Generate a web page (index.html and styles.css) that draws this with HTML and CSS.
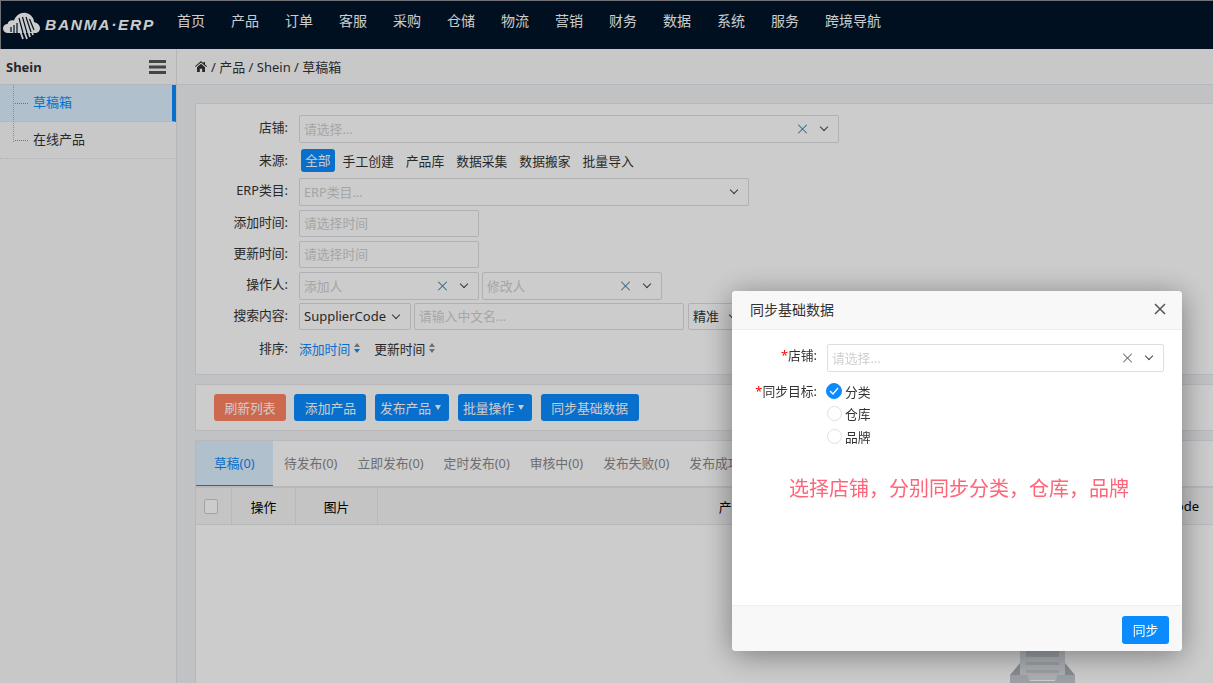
FILE: index.html
```html
<!DOCTYPE html>
<html lang="zh-CN">
<head>
  <meta charset="UTF-8">
  <title>草稿箱 | BANMA ERP</title>
  <link rel="stylesheet" href="styles.css">
</head>
<body>
  <!-- 顶部导航 -->
  <header class="topbar">
    <div class="logo">
      <svg class="logo-icon" width="38" height="28" viewBox="0 0 38 28">
        <path fill="#fff" d="M5 21C2 21 0 19 0 16.500C0 13.500 2 12 4.500 12C5 9 8 7.500 11 8.500C13 3 18 0 23 1C28 2 31 6 31 10C35 11 37 13.500 37 16C37 19 35 21 32 21Z"/>
        <path fill="none" stroke="#001529" stroke-width="1.200" d="M8 20V15M11 21V13M14 21V11M16 6L20 21M19.500 5L24 21M23 5L28 20M26.500 7L31 18"/>
        <path fill="none" stroke="#fff" stroke-width="1.800" d="M17.500 20L20 27M21.500 20L24 27M25.500 20L27 25M29 20L30 23"/>
      </svg>
      <span class="logo-text">BANMA·ERP</span>
    </div>
    <nav class="mainnav">
      <a href="#">首页</a>
      <a href="#">产品</a>
      <a href="#">订单</a>
      <a href="#">客服</a>
      <a href="#">采购</a>
      <a href="#">仓储</a>
      <a href="#">物流</a>
      <a href="#">营销</a>
      <a href="#">财务</a>
      <a href="#">数据</a>
      <a href="#">系统</a>
      <a href="#">服务</a>
      <a href="#">跨境导航</a>
    </nav>
  </header>

  <div class="layout">
    <!-- 左侧菜单 -->
    <aside class="sidebar">
      <div class="sidebar-title">
        <b>Shein</b>
        <svg width="17" height="14" viewBox="0 0 17 14"><path fill="#555" d="M0 0H17V3H0ZM0 5.500H17V8.500H0ZM0 11H17V14H0Z"/></svg>
      </div>
      <ul class="side-menu">
        <li class="active"><a href="#">草稿箱</a></li>
        <li><a href="#">在线产品</a></li>
      </ul>
    </aside>

    <main class="content">
      <div class="breadcrumb">
        <svg width="12" height="11" viewBox="0 0 12 11"><path fill="#333" d="M6 0L8.500 2.200V1H10V3.500L12 5.300L11.400 6L6 1.400L.6 6L0 5.300ZM2 6.200L6 2.800L10 6.200V11H7.200V7.800H4.800V11H2Z"/></svg>
        <span>/ 产品 / Shein / 草稿箱</span>
      </div>

      <div class="content-body">
        <!-- 搜索条件 -->
        <section class="panel filter-panel">
          <div class="form-row row-shop">
            <label>店铺:</label>
            <div class="select w-540"><span class="ph">请选择...</span><i class="clear clear-blue"></i><i class="arrow"></i></div>
          </div>
          <div class="form-row row-source">
            <label>来源:</label>
            <div class="source-list">
              <a href="#" class="on">全部</a>
              <a href="#">手工创建</a>
              <a href="#">产品库</a>
              <a href="#">数据采集</a>
              <a href="#">数据搬家</a>
              <a href="#">批量导入</a>
            </div>
          </div>
          <div class="form-row row-erp">
            <label>ERP类目:</label>
            <div class="select w-450"><span class="ph">ERP类目...</span><i class="arrow"></i></div>
          </div>
          <div class="form-row row-time">
            <label>添加时间:</label>
            <div class="select w-180 short"><span class="ph">请选择时间</span></div>
          </div>
          <div class="form-row row-time">
            <label>更新时间:</label>
            <div class="select w-180 short"><span class="ph">请选择时间</span></div>
          </div>
          <div class="form-row row-user">
            <label>操作人:</label>
            <div class="select w-180"><span class="ph">添加人</span><i class="clear clear-blue"></i><i class="arrow"></i></div>
            <div class="select w-180"><span class="ph">修改人</span><i class="clear clear-blue"></i><i class="arrow"></i></div>
          </div>
          <div class="form-row row-search">
            <label>搜索内容:</label>
            <div class="select w-112 short"><span class="val">SupplierCode</span><i class="arrow"></i></div>
            <div class="select w-270 short"><span class="ph">请输入中文名...</span></div>
            <div class="select w-60 short gap-left"><span class="val">精准</span><i class="arrow"></i></div>
          </div>
          <div class="form-row row-sort">
            <label>排序:</label>
            <a href="#" class="sort on">添加时间<i class="sort-icon"></i></a>
            <a href="#" class="sort">更新时间<i class="sort-icon"></i></a>
          </div>
        </section>

        <!-- 操作按钮 -->
        <section class="panel action-panel">
          <button class="btn btn-orange">刷新列表</button>
          <button class="btn">添加产品</button>
          <button class="btn btn-drop">发布产品<i class="caret"></i></button>
          <button class="btn btn-drop">批量操作<i class="caret"></i></button>
          <button class="btn">同步基础数据</button>
        </section>

        <!-- 列表 -->
        <section class="panel list-panel">
          <div class="tabs">
            <a href="#" class="active">草稿(0)</a>
            <a href="#">待发布(0)</a>
            <a href="#">立即发布(0)</a>
            <a href="#">定时发布(0)</a>
            <a href="#">审核中(0)</a>
            <a href="#">发布失败(0)</a>
            <a href="#">发布成功(0)</a>
          </div>
          <div class="table-head">
            <div class="cell"><span class="checkbox"></span></div>
            <div class="cell">操作</div>
            <div class="cell">图片</div>
            <div class="cell">产品</div>
            <div class="cell">SupplierCode</div>
          </div>
          <div class="table-empty">
            <svg width="65" height="60" viewBox="0 0 65 60">
              <path fill="#d6dade" d="M10 0H55V40H10Z"/>
              <path fill="#bcc1c7" d="M16 0H49V17H16Z"/>
              <path fill="#c2c6cc" d="M16 22H49V25H16ZM16 30H49V33H16Z"/>
              <path fill="#a8afb6" d="M10 23V35H0ZM55 23V35H65Z"/>
              <path fill="#c4c9cf" d="M0 35H18C18 39 19 41 22 41H43C46 41 47 39 47 35H65V60H0Z"/>
            </svg>
          </div>
        </section>
      </div>
    </main>
  </div>

  <div class="mask"></div>

  <!-- 同步基础数据弹窗 -->
  <div class="modal">
    <div class="modal-head">
      <span>同步基础数据</span>
      <svg width="12" height="12" viewBox="0 0 12 12"><path stroke="#555" stroke-width="1.500" d="M1 1L11 11M11 1L1 11"/></svg>
    </div>
    <div class="modal-body">
      <div class="modal-row">
        <label><em>*</em>店铺:</label>
        <div class="select w-337"><span class="ph">请选择...</span><i class="clear"></i><i class="arrow"></i></div>
      </div>
      <div class="modal-row row-target">
        <label><em>*</em>同步目标:</label>
        <div class="radio-list">
          <div class="radio checked">
            <span class="radio-dot"><svg width="10" height="8" viewBox="0 0 10 8"><path fill="none" stroke="#fff" stroke-width="1.300" d="M1 4L4 7L9 1"/></svg></span>分类
          </div>
          <div class="radio"><span class="radio-dot"></span>仓库</div>
          <div class="radio"><span class="radio-dot"></span>品牌</div>
        </div>
      </div>
      <p class="modal-tip">选择店铺，分别同步分类，仓库，品牌</p>
    </div>
    <div class="modal-foot">
      <button class="btn btn-sync">同步</button>
    </div>
  </div>
</body>
</html>
```

FILE: styles.css
```css
:root {
  --primary: #0a8cff;
  --border: #dcdee2;
  --text: #333;
  --placeholder: #d0d0d0;
}

* {
  box-sizing: border-box;
}

html, body {
  height: 100%;
}

body {
  margin: 0;
  overflow: hidden;
  background: #f2f3f5;
  color: var(--text);
  font-family: "Noto Sans", "Noto Sans CJK SC", sans-serif;
  font-size: 12.800px;
}

a {
  color: inherit;
  text-decoration: none;
}

i {
  font-style: normal;
}

/* 顶部导航 */
.topbar {
  display: flex;
  align-items: center;
  height: 49px;
  background: #001529;
  border-top: 1px solid #8c8f93;
  border-left: 1px solid #8c8f93;
}

.logo {
  display: flex;
  align-items: center;
  gap: 4px;
  width: 176px;
  padding: 1px 0 0 2px;
}

.logo-text {
  margin-top: -1px;
  color: #fff;
  font-family: "Liberation Sans", sans-serif;
  font-size: 15.500px;
  font-style: italic;
  font-weight: bold;
  letter-spacing: 1.700px;
  white-space: nowrap;
}

.mainnav {
  display: flex;
  gap: 26px;
  padding-bottom: 10px;
}

.mainnav a {
  color: #fff;
  font-size: 14px;
}

/* 布局 */
.layout {
  display: flex;
  height: calc(100% - 49px);
}

.sidebar {
  flex: none;
  width: 177px;
  background: #fbfbfb;
  border-right: 1px solid #e3e4e6;
  font-size: 13px;
}

.sidebar-title {
  display: flex;
  align-items: center;
  justify-content: space-between;
  height: 36px;
  padding: 0 10px 0 6px;
  border-bottom: 1px solid #e3e4e6;
}

.side-menu {
  position: relative;
  margin: 0;
  padding: 0;
  list-style: none;
}

.side-menu::before {
  content: "";
  position: absolute;
  z-index: 1;
  left: 13px;
  top: 0;
  height: 57px;
  border-left: 1px dotted #8a8f96;
}

.side-menu li {
  position: relative;
  height: 37px;
  padding-left: 33px;
  line-height: 34px;
  border-bottom: 1px dotted #e0e0e0;
}

.side-menu li::before {
  content: "";
  position: absolute;
  left: 15px;
  top: 18px;
  width: 13px;
  border-top: 1px dotted #8a8f96;
}

.side-menu li.active {
  background: #dcf0ff;
  border-right: 4px solid var(--primary);
  color: var(--primary);
}

.content {
  flex: 1;
  display: flex;
  flex-direction: column;
  min-width: 0;
}

.breadcrumb {
  display: flex;
  flex: none;
  align-items: center;
  gap: 4px;
  height: 36px;
  padding-left: 18px;
  background: #fbfbfb;
  border-bottom: 1px solid #e3e4e6;
  font-size: 13px;
}

.content-body {
  flex: 1;
  display: flex;
  flex-direction: column;
  min-height: 0;
  padding: 18px 0 0 18px;
}

.panel {
  flex: none;
  background: #fff;
  border: 1px solid #e6e7e9;
  border-right: 0;
  margin-bottom: 9px;
}

/* 搜索条件 */
.filter-panel {
  height: 272px;
  padding-top: 11px;
}

.form-row {
  display: flex;
  align-items: flex-start;
}

.form-row label {
  flex: none;
  width: 92px;
  margin-right: 11px;
  line-height: 25px;
  text-align: right;
}

.row-shop { margin-bottom: 6px; }
.row-source { height: 23px; margin-bottom: 6px; }
.row-source label { line-height: 23px; }
.row-erp { margin-bottom: 4px; }
.row-time { margin-bottom: 4px; }
.row-user { margin-bottom: 3px; gap: 3px; }
.row-user label { margin-right: 8px; }
.row-search { margin-bottom: 8px; gap: 3px; }
.row-search label { margin-right: 8px; }
.row-sort { align-items: center; height: 20px; }
.row-sort label { line-height: 20px; }

.select {
  display: flex;
  align-items: center;
  flex: none;
  height: 28px;
  padding: 0 4px 2px;
  background: #fff;
  border: 1px solid var(--border);
  border-radius: 2px;
}

.select.short { height: 27px; }
.w-540 { width: 540px; }
.w-450 { width: 450px; }
.w-337 { width: 337px; }
.w-270 { width: 270px; }
.w-180 { width: 180px; }
.w-112 { width: 112px; }
.w-60 { width: 60px; }
.gap-left { margin-left: 1px; }

.ph {
  flex: 1;
  color: var(--placeholder);
  white-space: nowrap;
}

.val {
  flex: 1;
  color: var(--text);
  font-size: 13px;
  white-space: nowrap;
}

.clear {
  position: relative;
  width: 10px;
  height: 10px;
  margin: 2px 13px 0 0;
}

.clear::before,
.clear::after {
  content: "";
  position: absolute;
  left: 4px;
  top: -1px;
  height: 12px;
  border-left: 1px solid #666;
  transform: rotate(45deg);
}

.clear::after {
  transform: rotate(-45deg);
}

.clear-blue::before,
.clear-blue::after {
  border-color: #3f7fa6;
}

.arrow {
  width: 6px;
  height: 6px;
  margin: -2px 7px 0 0;
  border-right: 1px solid #444;
  border-bottom: 1px solid #444;
  transform: rotate(45deg);
}

.source-list {
  display: flex;
  height: 23px;
  align-items: center;
  gap: 12px;
  margin-left: 2px;
}

.source-list a.on {
  padding: 0 4px;
  margin-right: -4px;
  line-height: 23px;
  background: var(--primary);
  border-radius: 3px;
  color: #fff;
}

.sort {
  display: flex;
  align-items: center;
  margin-right: 14px;
}

.sort.on {
  color: var(--primary);
}

.sort-icon {
  display: flex;
  flex-direction: column;
  gap: 2px;
  margin-left: 4px;
}

.sort-icon::before,
.sort-icon::after {
  content: "";
  border: 3px solid transparent;
  border-top: 0;
  border-bottom: 4px solid #8b8b8b;
}

.sort-icon::after {
  border-top: 4px solid #8b8b8b;
  border-bottom: 0;
}

.sort.on .sort-icon::after {
  border-top-color: var(--primary);
}

/* 按钮 */
.action-panel {
  display: flex;
  align-items: center;
  gap: 8.500px;
  height: 47px;
  padding-left: 18px;
}

.btn {
  height: 27px;
  padding: 0 10.400px;
  background: var(--primary);
  border: 0;
  border-radius: 3px;
  color: #fff;
  font: inherit;
}

.btn-orange {
  background: #ff8462;
}

.btn-drop {
  display: flex;
  align-items: center;
  width: 74.500px;
  padding: 0 0 0 5px;
}

.caret {
  margin-left: 4px;
  border: 3px solid transparent;
  border-top: 5px solid #fff;
  border-bottom: 0;
}

/* 列表 */
.list-panel {
  flex: 1;
  min-height: 0;
  margin-bottom: 0;
  border-bottom: 0;
  overflow: hidden;
}

.tabs {
  display: flex;
  height: 47px;
  border-bottom: 2px solid #e6e7e9;
}

.tabs a {
  padding: 0 10px;
  line-height: 45px;
  color: #8a8a8a;
  white-space: nowrap;
}

.tabs a.active {
  width: 77px;
  margin-right: 1px;
  padding: 0 18px;
  background: #dcf0ff;
  border-bottom: 1px solid var(--primary);
  color: var(--primary);
}

.table-head {
  display: grid;
  grid-template-columns: 36px 64px 82px 707px 127px;
  height: 37px;
  background: #f6f6f6;
  border-bottom: 1px solid #e6e7e9;
  color: #000;
}

.cell {
  display: flex;
  align-items: center;
  justify-content: center;
  border-right: 1px solid #e6e7e9;
}

.cell:nth-child(4) {
  border-right: 0;
}

.cell:last-child {
  justify-content: flex-start;
  padding-left: 32px;
  border-right: 0;
  font-size: 13px;
  white-space: nowrap;
}

.checkbox {
  width: 14px;
  height: 15px;
  margin-right: 5px;
  background: #fff;
  border: 1px solid #ccc;
  border-radius: 2px;
}

.table-empty {
  padding: 115px 0 0 814px;
}

/* 遮罩和弹窗 */
.mask {
  position: fixed;
  inset: 0;
  background: rgba(0, 0, 0, 0.2);
}

.modal {
  position: fixed;
  left: 732px;
  top: 291px;
  display: flex;
  flex-direction: column;
  width: 450px;
  height: 360px;
  background: #fff;
  border-radius: 4px;
  box-shadow: 0 4px 30px rgba(0, 0, 0, 0.4);
  overflow: hidden;
}

.modal-head {
  display: flex;
  align-items: center;
  justify-content: space-between;
  height: 39px;
  padding: 0 16px 2px 18px;
  background: #f8f8f8;
  border-bottom: 1px solid #eee;
  font-size: 14px;
}

.modal-body {
  flex: 1;
  padding-top: 14px;
}

.modal-row {
  display: flex;
  margin-bottom: 8px;
}

.modal-row label {
  flex: none;
  width: 85px;
  margin-right: 10px;
  line-height: 23px;
  text-align: right;
}

.modal-row em {
  color: #f00;
  font-style: normal;
}

.row-target label {
  line-height: 22px;
}

.radio-list {
  display: flex;
  flex-direction: column;
}

.radio {
  display: flex;
  align-items: center;
  gap: 3px;
  height: 22.500px;
}

.radio-dot {
  display: flex;
  align-items: center;
  justify-content: center;
  width: 15px;
  height: 15px;
  border: 1px solid #dcdee2;
  border-radius: 50%;
}

.checked .radio-dot {
  width: 16px;
  height: 16px;
  margin-left: -1px;
  background: var(--primary);
  border-color: var(--primary);
}

.modal-tip {
  margin: 27px 0 0;
  padding-left: 4px;
  color: #ff6478;
  font-size: 20px;
  line-height: 28px;
  text-align: center;
}

.modal-foot {
  display: flex;
  align-items: center;
  justify-content: flex-end;
  height: 46px;
  padding: 0 13px 0 0;
  background: #f8f8f8;
  border-top: 1px solid #eee;
}

.btn-sync {
  width: 47px;
  height: 28px;
  margin-top: 2px;
  padding: 0;
}
```
